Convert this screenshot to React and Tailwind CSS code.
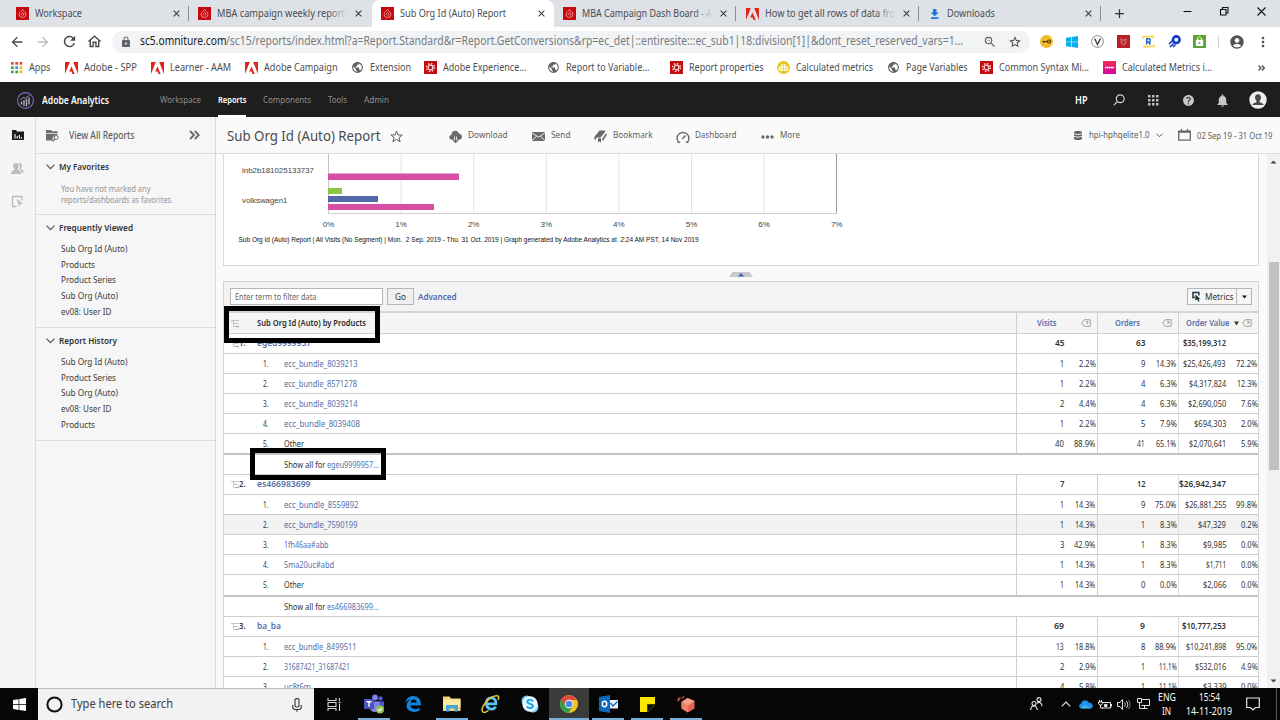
import { useLayoutEffect, useRef } from "react";
import {
  MdArrowBack,
  MdArrowForward,
  MdRefresh,
  MdOutlineHome,
  MdLock,
  MdZoomOut,
  MdStarBorder,
  MdAccountCircle,
  MdMoreVert,
  MdPublic,
  MdHelp,
  MdNotifications,
  MdClose,
  MdAdd,
} from "react-icons/md";

// Single line of text squeezed or stretched to a given width
function T({ w, className = "", children }) {
  const ref = useRef(null);
  useLayoutEffect(() => {
    const el = ref.current;
    el.style.transform = "none";
    const natural = el.getBoundingClientRect().width;
    el.style.transform = `scaleX(${w / natural})`;
  }, [w]);
  return (
    <span className={`block shrink-0 whitespace-pre ${className}`} style={{ width: w }}>
      <span ref={ref} className="inline-block origin-left">{children}</span>
    </span>
  );
}

/* ---------- small icons ---------- */

function RedIcon({ gear }) {
  return (
    <svg width="13" height="13" viewBox="0 0 13 13" className="shrink-0">
      <rect width="13" height="13" fill="#c4090f" />
      {gear ? (
        <g fill="none" stroke="#fbdcdc">
          <circle cx="6.5" cy="6.5" r="2.3" strokeWidth="1.2" />
          <circle cx="6.5" cy="6.5" r="3.9" strokeWidth="1.5" strokeDasharray="1.5 1.56" />
        </g>
      ) : (
        <g fill="none" stroke="#f59a9a" strokeWidth="0.9">
          <path d="M6.6 2.4C6.2 4 3 4.6 3 7.2a3.5 3.3 0 0 0 7 0C10 5.200 8 5 6.600 2.400z" />
          <path d="M5 8c0-1.800 1.500-1.200 1.700-2.600C8 6.200 8.300 8.600 6.500 8.800" />
        </g>
      )}
    </svg>
  );
}

function AdobeIcon() {
  return (
    <svg width="13" height="12" viewBox="0 0 13 12" className="shrink-0">
      <path d="M0 0h4.800L0 12zM8.200 0H13v12zM6.500 4.400L9.700 12H7.500l-1-2.400H4.200z" fill="#e1251b" />
    </svg>
  );
}

function AppsIcon() {
  const colors = ["#ea4335", "#ea4335", "#ea4335", "#34a853", "#4285f4", "#fbbc05", "#34a853", "#34a853", "#fbbc05"];
  return (
    <svg width="12" height="12" viewBox="0 0 12 12" className="shrink-0">
      {colors.map((c, i) => (
        <rect key={i} x={(i % 3) * 4.3} y={Math.floor(i / 3) * 4.3} width="2.700" height="2.700" fill={c} />
      ))}
    </svg>
  );
}

function BookmarkIcon({ kind }) {
  if (kind === "apps") return <AppsIcon />;
  if (kind === "adobe") return <AdobeIcon />;
  if (kind === "globe") return <MdPublic size={13} className="shrink-0 text-[#5f6368]" />;
  if (kind === "db")
    return (
      <span className="flex h-[13px] w-[13px] shrink-0 items-center justify-center rounded-full bg-[#e6c619] text-[8px] font-bold leading-none text-white">
        db
      </span>
    );
  if (kind === "pink")
    return (
      <svg width="13" height="13" viewBox="0 0 13 13" className="shrink-0">
        <defs>
          <linearGradient id="pk" x1="0" y1="0" x2="0" y2="1">
            <stop offset="0" stopColor="#ee2a53" />
            <stop offset="1" stopColor="#d60a9c" />
          </linearGradient>
        </defs>
        <rect width="13" height="13" fill="url(#pk)" />
        <path d="M2 6.500h9" stroke="#fff" strokeWidth="1.600" strokeDasharray="1.600 .3" />
      </svg>
    );
  return <RedIcon gear />;
}

function DownloadArrow() {
  return (
    <svg width="13" height="13" viewBox="0 0 13 13" className="shrink-0">
      <path d="M5 2h3.400v3.600h2.300L6.700 9.300 2.700 5.600H5zM3 10.300h7.400v1.600H3z" fill="#1a73e8" />
    </svg>
  );
}

/* ---------- browser chrome ---------- */

const tabs = [
  { title: "Workspace", w: 47, icon: "red", sep: true },
  { title: "MBA campaign weekly reporti", w: 130, icon: "red", fade: true },
  { title: "Sub Org Id (Auto) Report", w: 106, icon: "red", active: true },
  { title: "MBA Campaign Dash Board - A", w: 130, icon: "red", fade: true, sep: true },
  { title: "How to get all rows of data fro", w: 130, icon: "adobe", fade: true, sep: true },
  { title: "Downloads", w: 48, icon: "down", sep: true },
];

function TabStrip() {
  return (
    <div className="flex h-[27px] bg-[#dee1e6] pl-[7px] text-[11px] text-[#4a4d51]">
      {tabs.map((t) => (
        <div
          key={t.title}
          className={`flex h-[27px] w-[182.4px] items-center pl-[9px] ${t.active ? "rounded-t-lg bg-white" : ""}`}
        >
          {t.icon === "red" && <RedIcon />}
          {t.icon === "adobe" && <AdobeIcon />}
          {t.icon === "down" && <DownloadArrow />}
          <div className="relative ml-[6px] w-[131px] shrink-0">
            <T w={t.w}>{t.title}</T>
            {t.fade && <div className="absolute inset-y-0 right-0 w-5 bg-linear-to-r from-[#dee1e600] to-[#dee1e6]" />}
          </div>
          <MdClose size={11} className="ml-[5px] shrink-0 text-[#2f3235]" />
          {t.sep && <div className="ml-[6px] h-[15px] w-px shrink-0 bg-[#8b8e93]" />}
        </div>
      ))}
      <div className="flex w-[36px] items-center justify-center">
        <MdAdd size={15} className="text-[#2f3235]" />
      </div>
      <svg width="90" height="22" viewBox="0 0 90 22" className="ml-[39px]" fill="none" stroke="#111" strokeWidth="1.100">
        <path d="M7.500 11.500h8" />
        <path d="M44.500 9.500h5.500v5.500h-5.500zM46.500 9.500v-2h5.500v5.500h-2" />
        <path d="M81.500 7.500l8 8M89.500 7.500l-8 8" />
      </svg>
    </div>
  );
}

function Extensions() {
  return (
    <div className="flex items-center">
      <div className="flex w-[25.500px] justify-center">
        <svg width="13" height="13" viewBox="0 0 13 13">
          <circle cx="6.500" cy="6.500" r="6.500" fill="#f4b92a" />
          <g fill="none" stroke="#4b3a10" strokeWidth="1.200">
            <circle cx="9" cy="6.500" r="1.500" />
            <path d="M7.500 6.500H2.500M4 6.500v1.500" />
          </g>
        </svg>
      </div>
      <div className="flex w-[25.500px] justify-center">
        <svg width="12" height="12" viewBox="0 0 12 12" fill="#00aeef">
          <path d="M0 1.700L5.400 1v4.700H0zM6 .9L12 0v5.700H6zM0 6.300h5.400V11L0 10.300zM6 6.300h6V12l-6-.9z" />
        </svg>
      </div>
      <div className="flex w-[25.500px] justify-center">
        <svg width="13" height="13" viewBox="0 0 13 13" fill="none" stroke="#4a4a4a">
          <circle cx="6.500" cy="6.500" r="5.900" stroke="#888" />
          <path d="M3.600 3.500l2.900 6 2.900-6" strokeWidth="1.500" />
        </svg>
      </div>
      <div className="flex w-[25.500px] justify-center">
        <svg width="13" height="13" viewBox="0 0 13 13">
          <rect width="13" height="13" fill="#b52025" />
          <path d="M3 3.500c1 1 1.500.5 2 1.500h3c.5-1 1-.5 2-1.500M4 5.500l.5 3 2 1.500 2-1.500.5-3M5.500 7h.5M7.500 7H8" fill="none" stroke="#f1a7a7" strokeWidth=".8" />
        </svg>
      </div>
      <div className="flex w-[25.500px] justify-center">
        <svg width="13" height="13" viewBox="0 0 13 13" fill="none">
          <path d="M1 4V1.500h9M12 9v2.500H3M10 0l1.500 1.500L10 3M3 10l-1.500 1.500L3 13" stroke="#f7d63a" strokeWidth="1.300" />
          <path d="M4.700 9.500V3.800h2a1.500 1.500 0 0 1 0 3.200h-2M6.700 7l1.700 2.500" stroke="#2463c4" strokeWidth="1.500" />
        </svg>
      </div>
      <div className="flex w-[25.500px] justify-center">
        <svg width="13" height="13" viewBox="0 0 13 13" fill="none" stroke="#1438c8">
          <circle cx="8.300" cy="4.700" r="3.300" strokeWidth="2.600" />
          <path d="M4 6L1 9M5.500 8.500L2 12M7.500 9.500L5 12" strokeWidth="1.600" />
        </svg>
      </div>
      <div className="flex w-[25.500px] justify-center">
        <div className="flex h-[13px] w-[13px] items-center justify-center bg-[#5aa52e]">
          <MdLock size={11} className="text-white" />
        </div>
      </div>
    </div>
  );
}

function Toolbar() {
  return (
    <div className="flex h-[29px] items-center bg-white pl-[4px]">
      <div className="flex w-[26px] justify-center"><MdArrowBack size={16} className="text-[#44474a]" /></div>
      <div className="flex w-[26px] justify-center"><MdArrowForward size={16} className="text-[#b9bbbe]" /></div>
      <div className="flex w-[26px] justify-center"><MdRefresh size={17} className="text-[#44474a]" /></div>
      <div className="flex w-[25px] justify-center"><MdOutlineHome size={17} className="text-[#44474a]" /></div>
      <div className="ml-[5px] flex h-[22px] w-[918px] items-center rounded-full bg-[#f1f3f4] pl-[8px] text-[12.500px]">
        <MdLock size={12} className="shrink-0 text-[#5f6368]" />
        <T w={86.500} className="ml-[7.500px] text-[#202124]">sc5.omniture.com</T>
        <T w={737} className="text-[#777b80]">
          {"/sc15/reports/index.html?a=Report.Standard&r=Report.GetConversions&rp=ec_det|::entiresite:::ec_sub1|18:division[1]|&dont_reset_reserved_vars=1..."}
        </T>
        <MdZoomOut size={14} className="ml-[20px] shrink-0 text-[#5f6368]" />
        <MdStarBorder size={14} className="ml-[11px] shrink-0 text-[#44474a]" />
      </div>
      <div className="ml-[4px]"><Extensions /></div>
      <div className="ml-[5px] h-[12px] w-px bg-[#d0d3d6]" />
      <MdAccountCircle size={16} className="ml-[10px] text-[#505357]" />
      <MdMoreVert size={16} className="ml-[10px] text-[#505357]" />
    </div>
  );
}

const bookmarks = [
  { kind: "apps", label: "Apps", w: 21.500, cell: "w-[54px]" },
  { kind: "adobe", label: "Adobe - SPP", w: 53, cell: "w-[85.500px]" },
  { kind: "adobe", label: "Learner - AAM", w: 61, cell: "w-[94.500px]" },
  { kind: "adobe", label: "Adobe Campaign", w: 73.500, cell: "w-[106px]" },
  { kind: "globe", label: "Extension", w: 41, cell: "w-[73px]" },
  { kind: "gear", label: "Adobe Experience...", w: 83.500, cell: "w-[122.500px]" },
  { kind: "globe", label: "Report to Variable...", w: 83.500, cell: "w-[123.500px]" },
  { kind: "gear", label: "Report properties", w: 74.500, cell: "w-[107px]" },
  { kind: "db", label: "Calculated metrics", w: 77, cell: "w-[109.500px]" },
  { kind: "globe", label: "Page Variables", w: 61.500, cell: "w-[93px]" },
  { kind: "gear", label: "Common Syntax Mi...", w: 90, cell: "w-[123.500px]" },
  { kind: "pink", label: "Calculated Metrics i...", w: 90, cell: "w-[150px]" },
];

function BookmarksBar() {
  return (
    <div className="flex h-[26px] items-center bg-white pb-[3px] pl-[11px] text-[10.500px] text-[#4a4d51]">
      {bookmarks.map((b) => (
        <div key={b.label} className={`flex shrink-0 items-center gap-[6px] ${b.cell}`}>
          <BookmarkIcon kind={b.kind} />
          <T w={b.w}>{b.label}</T>
        </div>
      ))}
      <svg width="7" height="6" viewBox="0 0 7 6" className="ml-[5px]" fill="none" stroke="#44474a" strokeWidth="1.200">
        <path d="M.5.500L3 3 .5 5.500M3.800.500L6.300 3 3.800 5.500" />
      </svg>
    </div>
  );
}

/* ---------- app header ---------- */

function AppHeader() {
  return (
    <div className="flex h-[35px] items-center bg-[#1e1e1e] pl-[17px] pt-px text-[9.500px] text-[#8e8e8e]">
      <svg width="17" height="17" viewBox="0 0 17 17" fill="none">
        <circle cx="8.500" cy="8.500" r="7.900" stroke="#7d6bc4" strokeWidth="1.100" />
        <path d="M4.500 9.500v3M7 8v6M9.500 7v7.500M12 5.500v7" stroke="#b4b0c8" strokeWidth="1.400" />
        <path d="M3.500 7.500l3-2 2 .7 4-3" stroke="#b4b0c8" strokeWidth=".8" />
      </svg>
      <T w={67} className="ml-[8px] text-[10px] font-semibold text-white">Adobe Analytics</T>
      <T w={41} className="ml-[51px]">Workspace</T>
      <div className="ml-[16.500px] flex h-[34px] items-center border-y-2 border-t-transparent border-b-white">
        <T w={28.500} className="font-semibold text-white">Reports</T>
      </div>
      <T w={48} className="ml-[17px]">Components</T>
      <T w={19} className="ml-[17px]">Tools</T>
      <T w={25} className="ml-[17px]">Admin</T>
      <T w={12.500} className="ml-[686px] text-[10px] font-semibold text-white">HP</T>
      <svg width="12" height="12" viewBox="0 0 12 12" className="ml-[25px]" fill="none" stroke="#d5d5d5" strokeWidth="1.200">
        <circle cx="7.200" cy="4.800" r="3.900" />
        <path d="M4.300 7.600L.8 11.200" />
      </svg>
      <svg width="11" height="11" viewBox="0 0 11 11" className="ml-[23.500px]" fill="#bdbdbd">
        {[0, 1, 2, 3, 4, 5, 6, 7, 8].map((i) => (
          <rect key={i} x={(i % 3) * 4} y={Math.floor(i / 3) * 4} width="2.500" height="2.500" />
        ))}
      </svg>
      <MdHelp size={13} className="ml-[22.500px] text-[#c8c8c8]" />
      <MdNotifications size={15} className="ml-[20px] text-[#c8c8c8]" />
      <svg width="18" height="18" viewBox="0 0 18 18" className="ml-[19px]">
        <circle cx="9" cy="9" r="8.700" fill="#efefef" />
        <path d="M9 3.300c2 0 3 1.300 3 3.200 0 1.500-.7 2.700-1.500 3.400v1c.7.700 3.700 1 4.200 3H3.300c.5-2 3.500-2.300 4.200-3v-1C6.700 9.200 6 8 6 6.500c0-1.900 1-3.200 3-3.200z" fill="#4a4a4a" />
      </svg>
    </div>
  );
}

/* ---------- left side ---------- */

function Rail() {
  return (
    <div className="flex w-[36px] shrink-0 flex-col items-center border-r border-[#dcdcdc] bg-[#f5f5f5] pt-[12px]">
      <svg width="12" height="12" viewBox="0 0 12 12">
        <path d="M0 1h4.500v1.500H12V11H0z" fill="#1c1c1c" />
        <path d="M3 9.500V5M5.200 9.500V7M7.400 9.500V6M9.500 9.500V8" stroke="#fff" strokeWidth="1.100" />
      </svg>
      <svg width="13" height="13" viewBox="0 0 13 13" className="mt-[21px]" fill="#bcbcbc">
        <path d="M5 1c1.800 0 2.800 1.200 2.800 2.900 0 1.400-.6 2.300-1.200 2.900v.8c.8.900 3.300 1 3.500 4.400H0c.2-3.400 2.700-3.500 3.500-4.400v-.8C2.800 6.200 2.200 5.300 2.200 3.900 2.200 2.200 3.200 1 5 1z" />
        <path d="M8 .8c1.800 0 2.900 1.100 2.900 2.600 0 1.300-.5 2.200-1.200 2.800v.7c.9.700 3 .9 3.200 3.600h-2.200c-.4-1.800-1.700-2.600-2.600-3.200 1.100-1.600 1.200-4.800-.5-6.400z" />
      </svg>
      <svg width="13" height="13" viewBox="0 0 13 13" className="mt-[20px]" fill="none">
        <path d="M5.500 11.500H1.500V1.500h9.500v4" stroke="#bcbcbc" strokeWidth="1.300" />
        <path d="M5.500 3.500l6.500 5.300-2.900.3-1.100 2.900z" fill="#bcbcbc" />
      </svg>
    </div>
  );
}

function SideHead({ w, children }) {
  return (
    <div className="flex h-[26px] items-center pl-[9.500px]">
      <svg width="9" height="6" viewBox="0 0 9 6" fill="none" stroke="#555" strokeWidth="1.200">
        <path d="M.5.700l4 4 4-4" />
      </svg>
      <T w={w} className="ml-[4.500px] text-[9.500px] font-semibold text-[#333]">{children}</T>
    </div>
  );
}

function SideItem({ w, children }) {
  return (
    <div className="flex h-[15.800px] items-center pl-[25px] text-[9.500px] text-[#3c3c3c]">
      <T w={w}>{children}</T>
    </div>
  );
}

function Sidebar() {
  return (
    <div className="flex w-[180px] shrink-0 flex-col border-r border-[#d8d8d8] bg-[#f6f6f6]">
      <div className="flex h-[37px] items-center border-b border-[#dcdcdc] pl-[10px]">
        <svg width="13" height="13" viewBox="0 0 13 13" fill="none">
          <path d="M0 1h5l1 1.300h5.500V4H0zM0 4.800h11.500v1.400C8.500 5.500 6 8 6.700 11.500H0z" fill="#6e6e6e" />
          <circle cx="10.200" cy="8.500" r="2" stroke="#6e6e6e" />
          <path d="M8.800 10L6.500 12.500" stroke="#6e6e6e" strokeWidth="1.200" />
        </svg>
        <T w={65.500} className="ml-[9.500px] text-[10px] font-medium text-[#5f5f5f]">View All Reports</T>
        <svg width="11" height="10" viewBox="0 0 11 10" className="ml-[55px]" fill="none" stroke="#666" strokeWidth="1.800">
          <path d="M1 1l4 4-4 4M5.800 1l4 4-4 4" />
        </svg>
      </div>
      <div className="h-[61px] border-b border-[#dcdcdc]">
        <SideHead w={50}>My Favorites</SideHead>
        <div className="pl-[25px] pt-[2.500px] text-[9.500px] leading-[11px] text-[#959595]">
          <T w={89.500}>You have not marked any</T>
          <T w={112}>reports/dashboards as favorites.</T>
        </div>
      </div>
      <div className="h-[113px] border-b border-[#dcdcdc]">
        <SideHead w={74}>Frequently Viewed</SideHead>
        <SideItem w={66.500}>Sub Org Id (Auto)</SideItem>
        <SideItem w={34}>Products</SideItem>
        <SideItem w={55}>Product Series</SideItem>
        <SideItem w={57}>Sub Org (Auto)</SideItem>
        <SideItem w={50.500}>ev08: User ID</SideItem>
      </div>
      <div className="h-[113px] border-b border-[#dcdcdc]">
        <SideHead w={58}>Report History</SideHead>
        <SideItem w={66.500}>Sub Org Id (Auto)</SideItem>
        <SideItem w={55}>Product Series</SideItem>
        <SideItem w={57}>Sub Org (Auto)</SideItem>
        <SideItem w={50.500}>ev08: User ID</SideItem>
        <SideItem w={34}>Products</SideItem>
      </div>
    </div>
  );
}

/* ---------- report ---------- */

function ReportHeader() {
  return (
    <div className="flex h-[37px] items-center border-b border-[#dcdcdc] bg-[#fafafa] pl-[10.500px] text-[9.500px] text-[#5c5c5c]">
      <T w={153.500} className="text-[15px] text-[#4b4b4b]">Sub Org Id (Auto) Report</T>
      <svg width="13" height="13" viewBox="0 0 13 13" className="ml-[10px] mt-[3px]" fill="none" stroke="#5c5c5c">
        <path d="M6.500 1l1.500 3.900 4.200.2-3.300 2.600 1.200 4-3.600-2.300-3.600 2.300 1.200-4L.8 5.100 5 4.900z" />
      </svg>
      <svg width="13" height="13" viewBox="0 0 13 13" className="ml-[46px] mt-[3px]">
        <path d="M3 9.800C-.6 9.800-.6 5.200 2.300 5 2.300-.2 9.200-.6 9.900 3.700c4-.2 4 6 .1 6.100H8V6.500H5v3.300z" fill="#6a6a6a" />
        <path d="M6.500 5.500v6M4 9.800l2.500 2.700L9 9.800" fill="none" stroke="#6a6a6a" strokeWidth="1.300" />
      </svg>
      <T w={39.500} className="ml-[6px]">Download</T>
      <svg width="13" height="9" viewBox="0 0 13 9" className="ml-[24.500px] mt-[3px]">
        <path d="M0 0h13v9H0z" fill="#6a6a6a" />
        <path d="M0 .8l6.500 4.400L13 .8M0 8.500l4.500-4.200M13 8.500L8.500 4.300" fill="none" stroke="#fafafa" strokeWidth=".9" />
      </svg>
      <T w={19.500} className="ml-[5.500px]">Send</T>
      <svg width="13" height="13" viewBox="0 0 13 13" className="ml-[24px] mt-[3px]">
        <path d="M5.500.5H11.500L10 3.500l-3.500 4H2.700L1.500 9.800C-.6 9 .1 7 1.500 5.500z" fill="#6a6a6a" />
        <path d="M4 8.300v4.200l1.500-1.200L7 12.500V8.300z" fill="#6a6a6a" />
        <path d="M12.400 4L9 9.500H8" fill="none" stroke="#6a6a6a" strokeWidth="1.600" />
      </svg>
      <T w={39.500} className="ml-[5.500px]">Bookmark</T>
      <svg width="14" height="12" viewBox="0 0 14 12" className="ml-[23.500px] mt-[3px]" fill="none" stroke="#6a6a6a" strokeWidth="1.400">
        <path d="M2.500 11.200a5.900 5.900 0 1 1 9 0M1.500 11.200h2.700M9.800 11.200h2.700" />
        <path d="M6.300 8l3.200-3.500" />
      </svg>
      <T w={41.500} className="ml-[5.500px]">Dashboard</T>
      <svg width="13" height="4" viewBox="0 0 13 4" className="ml-[24px] mt-[3px]" fill="#6a6a6a">
        <circle cx="2" cy="2" r="1.700" />
        <circle cx="6.500" cy="2" r="1.700" />
        <circle cx="11" cy="2" r="1.700" />
      </svg>
      <T w={20} className="ml-[6px]">More</T>
      <svg width="8" height="9" viewBox="0 0 8 9" className="ml-[274.500px]">
        <path d="M0 1.300C0-.4 8-.4 8 1.300v6.400c0 1.700-8 1.700-8 0z" fill="#666" />
        <path d="M0 2.700c2 1 6 1 8 0M0 5.300c2 1 6 1 8 0" fill="none" stroke="#fafafa" strokeWidth=".9" />
      </svg>
      <T w={60.500} className="ml-[6.500px] text-[9.500px]">hpi-hphqelite1.0</T>
      <svg width="7" height="5" viewBox="0 0 7 5" className="ml-[7px]" fill="none" stroke="#555">
        <path d="M.5.700l3 3 3-3" />
      </svg>
      <svg width="13" height="12" viewBox="0 0 13 12" className="ml-[15px]" fill="none" stroke="#666" strokeWidth="1.300">
        <path d="M.7 2.200h11.600v9H.7zM3.500 0v2.200M9.500 0v2.200M.7 3h11.600" />
      </svg>
      <T w={75.500} className="ml-[5.500px] pt-[2px] text-[9.500px]">02 Sep 19 - 31 Oct 19</T>
    </div>
  );
}

function Chart() {
  const step = 72.6;
  const x0 = 104.5;
  return (
    <svg width="1034" height="111" viewBox="0 0 1034 111" className="block [font-family:'Liberation_Sans',Arial,sans-serif]">
      {[1, 2, 3, 4, 5, 6].map((i) => (
        <path key={i} d={`M${x0 + i * step} 0V59`} stroke="#e4e4e4" />
      ))}
      <path d="M104.500 0V59" stroke="#c4c4c4" />
      <path d="M612.500 0V59" stroke="#9a9a9a" />
      <path d="M104 59.500h509" stroke="#cfcfcf" />
      <rect x="104" y="19.500" width="131" height="6.500" fill="#d64fa2" />
      <rect x="104" y="34" width="14" height="6" fill="#89c540" />
      <rect x="104" y="42" width="50" height="6" fill="#5368a8" />
      <rect x="104" y="50" width="106" height="6" fill="#d64fa2" />
      <g fill="#444" fontSize="8">
        <text x="18" y="18.500" textLength="72" lengthAdjust="spacingAndGlyphs">inb2b181025133737</text>
        <text x="18" y="49" textLength="45.500" lengthAdjust="spacingAndGlyphs">volkswagen1</text>
      </g>
      <g fill="#444" fontSize="8" textAnchor="middle">
        {[0, 1, 2, 3, 4, 5, 6, 7].map((i) => (
          <text key={i} x={x0 + i * step} y="73">{i}%</text>
        ))}
      </g>
      <text x="14.500" y="87.500" fontSize="6.800" fill="#111" textLength="460" lengthAdjust="spacingAndGlyphs" className="whitespace-pre">
        {"Sub Org Id (Auto) Report | All Visits (No Segment) | Mon.  2 Sep. 2019 - Thu. 31 Oct. 2019 | Graph generated by Adobe Analytics at  2:24 AM PST, 14 Nov 2019"}
      </text>
    </svg>
  );
}

function TreeIcon() {
  return (
    <svg width="9" height="9" viewBox="0 0 9 9" className="shrink-0" fill="none">
      <path d="M0 1.500h8M2.500 1.500v6H5M2.500 4.500h5" stroke="#c4c4c4" />
      <path d="M5 7.500h3" stroke="#9aa8c8" strokeWidth="1.300" />
    </svg>
  );
}

function HelpTag() {
  return (
    <svg width="10" height="8" viewBox="0 0 10 8" className="shrink-0" fill="none" stroke="#999" strokeWidth=".9">
      <path d="M3.200.7h6v6.600h-6L.6 4z" />
      <path d="M5 2.500h2v1.300H6v1.500" />
    </svg>
  );
}

const groups = [
  {
    n: "1.", name: "egeu9999957", nw: 54, visits: ["45", 9.5], orders: ["63", 9.5], value: ["$35,199,312", 43],
    last: "h-[21px]", more: "egeu9999957...", mw: 52,
    rows: [
      ["ecc_bundle_8039213", 73.500, "1", "2.2%", "9", "14.3%", "$25,426,493", "72.2%"],
      ["ecc_bundle_8571278", 73, "1", "2.2%", "4", "6.3%", "$4,317,824", "12.3%"],
      ["ecc_bundle_8039214", 73.500, "2", "4.4%", "4", "6.3%", "$2,690,050", "7.6%"],
      ["ecc_bundle_8039408", 76, "1", "2.2%", "5", "7.9%", "$694,303", "2.0%"],
      ["Other", 20, "40", "88.9%", "41", "65.1%", "$2,070,641", "5.9%"],
    ],
  },
  {
    n: "2.", name: "es466983699", nw: 53.500, visits: ["7", 4.5], orders: ["12", 8.5], value: ["$26,942,347", 47],
    last: "h-[22px]", more: "es466983699...", mw: 52,
    rows: [
      ["ecc_bundle_8559892", 74.500, "1", "14.3%", "9", "75.0%", "$26,881,255", "99.8%"],
      ["ecc_bundle_7590199", 73.500, "1", "14.3%", "1", "8.3%", "$47,329", "0.2%"],
      ["1fh46aa#abb", 44.500, "3", "42.9%", "1", "8.3%", "$9,985", "0.0%"],
      ["5ma20uc#abd", 50, "1", "14.3%", "1", "8.3%", "$1,711", "0.0%"],
      ["Other", 20, "1", "14.3%", "0", "0.0%", "$2,066", "0.0%"],
    ],
  },
  {
    n: "3.", name: "ba_ba", nw: 24, visits: ["69", 10], orders: ["9", 5], value: ["$10,777,253", 44],
    rows: [
      ["ecc_bundle_8499511", 72.500, "13", "18.8%", "8", "88.9%", "$10,241,898", "95.0%"],
      ["31687421_31687421", 66, "2", "2.9%", "1", "11.1%", "$532,016", "4.9%"],
      ["uc8t6m", 27, "4", "5.8%", "1", "11.1%", "$3,339", "0.0%"],
    ],
  },
];

// Width of a figure in the narrow table digits
function figureWidth(s) {
  if (s === "1") return 4;
  let w = 0;
  for (const ch of s) {
    if (ch === "1") w += 3.3;
    else if (ch === "." || ch === ",") w += 1.5;
    else if (ch === "%") w += 6.6;
    else w += 4.4;
  }
  return w;
}

function Cell({ value, pct, bold, last }) {
  const w = Array.isArray(value) ? value[1] : figureWidth(value);
  return (
    <div className={`flex h-full shrink-0 items-center self-stretch border-l ${last ? "w-[80px] border-l-[#dedede]" : "w-[81px] border-l-[#cfcfcf]"}`}>
      <div className={`flex w-[47px] shrink-0 justify-end ${bold ? "text-[9.500px] font-semibold" : ""}`}>
        <T w={w}>{Array.isArray(value) ? value[0] : value}</T>
      </div>
      <div className="flex w-[31.500px] shrink-0 justify-end">{pct && <T w={figureWidth(pct)}>{pct}</T>}</div>
    </div>
  );
}

function Group({ g }) {
  return (
    <>
      <div className="flex h-[20px] shrink-0 items-center border-b border-[#cdcdcd]">
        <div className="flex flex-1 items-center pl-[6.500px]">
          <TreeIcon />
          <T w={6.500} className="-ml-px text-[9.500px] font-semibold">{g.n}</T>
          <T w={g.nw} className="ml-[12px] text-[9.500px] font-semibold text-[#5470ab]">{g.name}</T>
        </div>
        <Cell bold value={g.visits} />
        <Cell bold value={g.orders} />
        <Cell bold last value={g.value} />
      </div>
      {g.rows.map((r, i) => (
        <div
          key={i}
          className={`flex shrink-0 items-center border-[#cdcdcd] ${
            i === 4 ? `border-b-2 border-b-[#c4c4bb] ${g.last}` : "h-[20px] border-b"
          } ${r[0] === "ecc_bundle_7590199" ? "bg-[#f2f2f2]" : ""}`}
        >
          <div className="flex flex-1 items-center pl-[38.500px]">
            <T w={5.500}>{`${i + 1}.`}</T>
            <T w={r[1]} className={`ml-[15.500px] ${r[0] === "Other" ? "" : "text-[#5470ab]"}`}>{r[0]}</T>
          </div>
          <Cell value={r[2]} pct={r[3]} />
          <Cell value={r[4]} pct={r[5]} />
          <Cell last value={r[6]} pct={r[7]} />
        </div>
      ))}
      {g.more && (
        <div className="flex h-[20px] shrink-0 items-center border-b border-[#cdcdcd] pl-[59.500px]">
          <T w={41.500}>Show all for</T>
          <T w={g.mw} className="ml-[2px] text-[#5470ab]">{g.more}</T>
        </div>
      )}
    </>
  );
}

function ReportTable() {
  return (
    <div className="mt-[15px] flex w-[1036px] flex-col border border-b-0 border-[#d4d4d4] bg-white text-[9px] text-[#333]">
      <div className="flex h-[31px] shrink-0 items-center border-b-2 border-[#d4d4d4] bg-[#f3f3f3] pl-[6px]">
        <div className="flex h-[17px] w-[153px] items-center border border-[#b5b5b5] bg-white pl-[4px]">
          <T w={81.500} className="text-[#666]">Enter term to filter data</T>
        </div>
        <div className="ml-[4px] flex h-[17px] w-[27px] items-center justify-center border border-[#b5b5b5] bg-[#f0f0f0]">
          <T w={11}>Go</T>
        </div>
        <T w={38.500} className="ml-[4px] font-semibold text-[#4a69ad]">Advanced</T>
        <div className="ml-[730.500px] flex h-[17px] w-[65px] items-center border border-[#b5b5b5] bg-[#f5f5f5] pl-[4px]">
          <svg width="9" height="11" viewBox="0 0 9 11" fill="none">
            <path d="M3 6.500H1v-5h6v3" stroke="#1d3340" strokeWidth="1.500" />
            <path d="M3.500 3.500l5 4.500H6.700l1 2.400-1.200.5-1-2.400-2 1z" fill="#1d2a30" />
          </svg>
          <T w={28.500} className="ml-[4px]">Metrics</T>
          <div className="ml-[3px] flex h-[15px] w-[15px] items-center justify-center border-l border-[#b5b5b5]">
            <svg width="5" height="4" viewBox="0 0 5 4"><path d="M0 .5h5l-2.500 3z" fill="#111" /></svg>
          </div>
        </div>
      </div>
      <div className="flex h-[21px] shrink-0 items-center border-b border-[#d0d0d0] bg-[#f5f5f5] text-[9.500px]">
        <div className="flex flex-1 items-center pl-[6.500px]">
          <TreeIcon />
          <T w={109} className="ml-[17px] font-semibold text-[#2a2a2a]">Sub Org Id (Auto) by Products</T>
        </div>
        <div className="flex h-full w-[81px] items-center border-l border-[#cfcfcf] pl-[19.500px]">
          <T w={19.500} className="font-semibold text-[#5470ab]">Visits</T>
          <div className="ml-[25px]"><HelpTag /></div>
        </div>
        <div className="flex h-full w-[81px] items-center border-l border-[#cfcfcf] pl-[16.500px]">
          <T w={25} className="font-semibold text-[#5470ab]">Orders</T>
          <div className="ml-[22px]"><HelpTag /></div>
        </div>
        <div className="flex h-full w-[80px] items-center border-l border-[#cfcfcf] pl-[7px]">
          <T w={43.500} className="font-semibold text-[#5470ab]">Order Value</T>
          <svg width="5" height="5" viewBox="0 0 5 5" className="ml-[4.500px]"><path d="M0 .5h5l-2.500 4z" fill="#234a12" /></svg>
          <div className="ml-[3px]"><HelpTag /></div>
        </div>
      </div>
      {groups.map((g) => (
        <Group key={g.n} g={g} />
      ))}
    </div>
  );
}

function Report() {
  return (
    <div className="flex min-w-0 flex-1 flex-col">
      <ReportHeader />
      <div className="flex h-[534px]">
        <div className="relative h-[534px] w-[1051px] overflow-hidden bg-[#fafafa] pl-[7px]">
          <div className="h-[112px] w-[1036px] border border-t-0 border-[#dadada] bg-white">
            <Chart />
          </div>
          <ReportTable />
          {/* collapse handle between graph and table */}
          <svg width="24" height="5" viewBox="0 0 24 5" className="absolute left-[513px] top-[118px]">
            <path d="M3.500 0h17L24 5H0z" fill="#c9cacc" />
            <path d="M12 1l3.200 3.500H8.800z" fill="#3a68b0" />
          </svg>
          {/* highlight boxes */}
          <div className="absolute left-[8px] top-[152px] h-[37px] w-[156px] border-[5px] border-black" />
          <div className="absolute left-[34px] top-[294px] h-[32px] w-[136px] border-[5px] border-black" />
        </div>
        <div className="flex w-[13px] flex-col items-center bg-[#f1f1f1]">
          <svg width="7" height="4" viewBox="0 0 7 4" className="mt-[6px]"><path d="M.5 3.500h6L3.500.5z" fill="#444" /></svg>
          <div className="mt-[98px] h-[208px] w-[10px] bg-[#c1c1c1]" />
          <svg width="7" height="4" viewBox="0 0 7 4" className="mt-[209px]"><path d="M.5.500h6L3.500 3.500z" fill="#444" /></svg>
        </div>
      </div>
    </div>
  );
}

/* ---------- taskbar ---------- */

function Task({ running, active, children }) {
  return (
    <div className={`flex h-[32px] w-[39.100px] shrink-0 flex-col items-center justify-between ${active ? "bg-[#3b3b3b]" : ""}`}>
      <div className="flex h-[30px] items-center pt-[2px]">{children}</div>
      <div className={`h-[2px] ${active ? "w-full" : "w-[32px]"} ${running ? "bg-[#76b0dd]" : ""}`} />
    </div>
  );
}

function Taskbar() {
  return (
    <div className="flex h-[32px] items-center bg-[#060606]">
      <div className="flex w-[38px] justify-center">
        <svg width="13" height="13" viewBox="0 0 13 13" fill="#fff">
          <path d="M0 2l5.600-.8v5H0zM6.300 1.100L13 0v6.200H6.300zM0 6.900h5.600v5L0 11zM6.300 6.900H13V13l-6.700-.9z" />
        </svg>
      </div>
      <div className="flex h-[32px] w-[276px] items-center border-t border-[#bdbdbd] bg-[#f2f2f2] pl-[8px]">
        <svg width="17" height="17" viewBox="0 0 17 17" fill="none">
          <circle cx="8.500" cy="8.500" r="7.100" stroke="#111" strokeWidth="2" />
        </svg>
        <T w={102} className="ml-[7.500px] text-[12.500px] text-[#3b3b3b]">Type here to search</T>
        <svg width="10" height="14" viewBox="0 0 10 14" className="ml-[119.500px]" fill="none" stroke="#333" strokeWidth="1.100">
          <rect x="3" y=".6" width="4" height="8.400" rx="1.500" />
          <path d="M.8 7v2.300c0 1.500 1 2.200 2.500 2.200h3.400c1.500 0 2.500-.7 2.500-2.200V7M5 11.500v2.300" />
        </svg>
      </div>
      <div className="flex w-[40px] justify-center">
        <svg width="14" height="13" viewBox="0 0 14 13" fill="none" stroke="#d5d5d5" strokeWidth="1.100">
          <path d="M1 0v2.500h8V0M1 13v-2.500h8V13M1 4.500h8v4H1zM12.500 0v3M12.500 6v7" />
          <path d="M11.500 4.500h2" strokeWidth="1.500" />
        </svg>
      </div>
      <Task running>
        <svg width="20" height="20" viewBox="0 0 20 20">
          <circle cx="16.500" cy="4.500" r="2.200" fill="#5059c9" />
          <circle cx="11" cy="3.500" r="2.900" fill="#7b83eb" />
          <path d="M13 7.500h7V13c0 2.500-3 4-5 2.500z" fill="#5059c9" />
          <path d="M6 7.500h9.500v6c0 6-9.500 6-9.500 0z" fill="#7b83eb" />
          <rect y="5" width="10" height="10" rx="1" fill="#4b53bc" />
          <path d="M2.500 7.700h5M5 7.700v5" stroke="#fff" strokeWidth="1.400" />
          <circle cx="16" cy="15.500" r="4" fill="#92c353" />
          <path d="M14 15.500l1.500 1.500 2.500-2.800" fill="none" stroke="#fff" strokeWidth="1.200" />
        </svg>
      </Task>
      <Task>
        <svg width="16" height="16" viewBox="0 0 16 16">
          <path d="M.3 7.200C1 2.500 4.200 0 8.200 0c4.800 0 7.600 3.500 7.600 7.500V9.500H5.500c.2 4 5.800 4.200 9 2.200v3.100C9.500 17.300 1.600 15.800 1.600 9.800c0-2.800 1.500-4.800 4-6C3.500 3.900 1.500 5.200.3 7.200zM5.600 6.500h6c0-4-5.500-4-6 0z" fill="#1382d8" />
        </svg>
      </Task>
      <Task running>
        <svg width="18" height="16" viewBox="0 0 18 16">
          <path d="M0 .5h6.500l1.500 2h9.500v12.500H0z" fill="#f2d577" />
          <path d="M0 3.500h17.500v8H0z" fill="#fbe8a2" />
          <path d="M3 9h12v6.500h-3.500v-3h-5v3H3z" fill="#45a6dc" />
        </svg>
      </Task>
      <Task>
        <svg width="19" height="18" viewBox="0 0 19 18" fill="none">
          <path d="M14.800 8.800H5.500a4.800 4.800 0 1 1 9.300 0zM5.500 9.300c.2 5.500 7 6 9.300 2.500" stroke="#5cc5f2" strokeWidth="2.800" />
          <path d="M2 17C-1.500 14 7 1.500 15.500.8c3-.2 2.300 2.500 1.500 4M2 17c1.500 1 4-.5 5.500-1.800" stroke="#f0c52f" strokeWidth="1.500" />
        </svg>
      </Task>
      <Task>
        <svg width="18" height="18" viewBox="0 0 18 18">
          <circle cx="6" cy="6" r="5.500" fill="#6fd0f7" />
          <circle cx="12" cy="12" r="5.500" fill="#6fd0f7" />
          <circle cx="9" cy="9" r="7.700" fill="#e9f8fe" />
          <path d="M12 6.300C11 4.300 6.300 4.400 6.300 6.800c0 2.700 5.600 1.500 5.600 4.300 0 2.400-5 2.700-6 .2" fill="none" stroke="#12a5e6" strokeWidth="1.900" />
        </svg>
      </Task>
      <Task running active>
        <svg width="18" height="18" viewBox="0 0 18 18">
          <circle cx="9" cy="9" r="9" fill="#fbc116" />
          <path d="M9 9L1.200 4.500A9 9 0 0 0 8.500 18L13 11z" fill="#31a350" />
          <path d="M1.200 4.500A9 9 0 0 1 16.800 5H9L5.500 11z" fill="#dd4b3e" />
          <circle cx="9" cy="9" r="4.200" fill="#fff" />
          <circle cx="9" cy="9" r="3.300" fill="#4a88ee" />
        </svg>
      </Task>
      <Task running>
        <svg width="19" height="18" viewBox="0 0 19 18">
          <path d="M0 2l11-2v18L0 16z" fill="#0a69bd" />
          <path d="M11 5h8v8.500h-8z" fill="#e8f2fb" />
          <path d="M11.500 8l2.500 3 4.500-4.500" fill="none" stroke="#0a69bd" strokeWidth="1.200" />
          <ellipse cx="5.500" cy="9" rx="2.200" ry="2.700" fill="none" stroke="#fff" strokeWidth="1.500" />
        </svg>
      </Task>
      <Task running>
        <svg width="15" height="15" viewBox="0 0 15 15">
          <path d="M0 0h15v8l-7 7H0z" fill="#fde500" />
          <path d="M8 8h7l-7 7z" fill="#111" />
          <path d="M7.500 15V7.500H15" fill="none" stroke="#111" strokeWidth=".8" />
        </svg>
      </Task>
      <Task running>
        <svg width="18" height="17" viewBox="0 0 18 17">
          <path d="M10.500 2L17.500 5v7.500L11 16.500 4.500 12.500V6z" fill="#e2674f" />
          <path d="M10.500 2l7 3-6.500 4.500L4.500 6z" fill="#f4a08b" />
          <path d="M11 9.500v7l-6.500-4V6z" fill="#ee8068" />
          <path d="M1 6L.3 3.200 2 1.500h2L3 3.500zM4.500 3l1-2.500H8L6.500 2z" fill="#c9503c" />
        </svg>
      </Task>
      <div className="ml-[324px] flex items-center text-white">
        <svg width="13" height="14" viewBox="0 0 13 14" fill="none" stroke="#e5e5e5" strokeWidth="1.100">
          <circle cx="4" cy="6.500" r="2" />
          <path d="M.7 13c0-5.300 6.600-5.300 6.600 0" />
          <circle cx="9" cy="2.600" r="2" />
          <path d="M7 6.500c2-2.300 5-.5 5 2.800" />
        </svg>
        <svg width="10" height="6" viewBox="0 0 10 6" className="ml-[18px]" fill="none" stroke="#e5e5e5" strokeWidth="1.200">
          <path d="M.7 5.300L5 1l4.300 4.300" />
        </svg>
        <svg width="14" height="9" viewBox="0 0 14 9" className="ml-[8px]">
          <path d="M3 8.500C-.8 8.500-.6 4 2.300 3.500 3-.5 8.500-.5 9.500 2.500c5-.3 5.500 6 1.500 6z" fill="#1a93e8" />
          <path d="M3 8.500c-1-.5 0-2 3-3.500l6 3.200z" fill="#41b4f2" />
        </svg>
        <svg width="14" height="11" viewBox="0 0 14 11" className="ml-[5px]" fill="none" stroke="#e5e5e5">
          <path d="M5 3.500h7.500v5.500H4M13.500 5v2.500M1.500 1v2M3.500 1v2M.5 3h4v1.500c0 2-4 2-4 0zM2.500 6v3H5" />
          <path d="M6.500 5.500h2.500v2h-2.500z" fill="#e5e5e5" />
        </svg>
        <svg width="14" height="11" viewBox="0 0 14 11" className="ml-[5px]" fill="none" stroke="#e5e5e5">
          <path d="M.5 3.500h2.500l2.500-3v10l-2.500-3H.5zM7.500 3.500c1 1 1 3 0 4M9.300 2c2 2 2 5 0 7" />
          <path d="M11.300.8c2.200 2.800 2.200 6.600 0 9.400" stroke="#777" />
        </svg>
        <svg width="13" height="12" viewBox="0 0 13 12" className="ml-[6px]" fill="none" stroke="#e5e5e5">
          <path d="M4.500 1.500h8v6h-8M7.500 7.500v3M4.500 10.500h6M.5.500h4v4h-4zM2.500 4.500v6h2" />
        </svg>
        <div className="ml-[8px] flex w-[18px] flex-col items-center text-[10px] leading-[14px]">
          <T w={18}>ENG</T>
          <T w={9}>IN</T>
        </div>
        <div className="ml-[10.500px] flex w-[46px] flex-col items-center text-[10.500px] leading-[14px]">
          <T w={21}>15:54</T>
          <T w={46}>14-11-2019</T>
        </div>
        <svg width="14" height="14" viewBox="0 0 14 14" className="ml-[14px]" fill="none" stroke="#e5e5e5" strokeWidth="1.200">
          <path d="M.7 1h12.600v9.500H9.500L7 13l-2.500-2.500H.7z" />
        </svg>
        <div className="ml-[16px] h-[32px] w-px bg-[#555]" />
      </div>
    </div>
  );
}

function App() {
  return (
    <div className="flex h-[720px] w-[1280px] flex-col overflow-hidden bg-white leading-normal [font-family:'Noto_Sans','Open_Sans',sans-serif]">
      <TabStrip />
      <Toolbar />
      <BookmarksBar />
      <AppHeader />
      <div className="flex h-[571px]">
        <Rail />
        <Sidebar />
        <Report />
      </div>
      <Taskbar />
    </div>
  );
}

export default App;
